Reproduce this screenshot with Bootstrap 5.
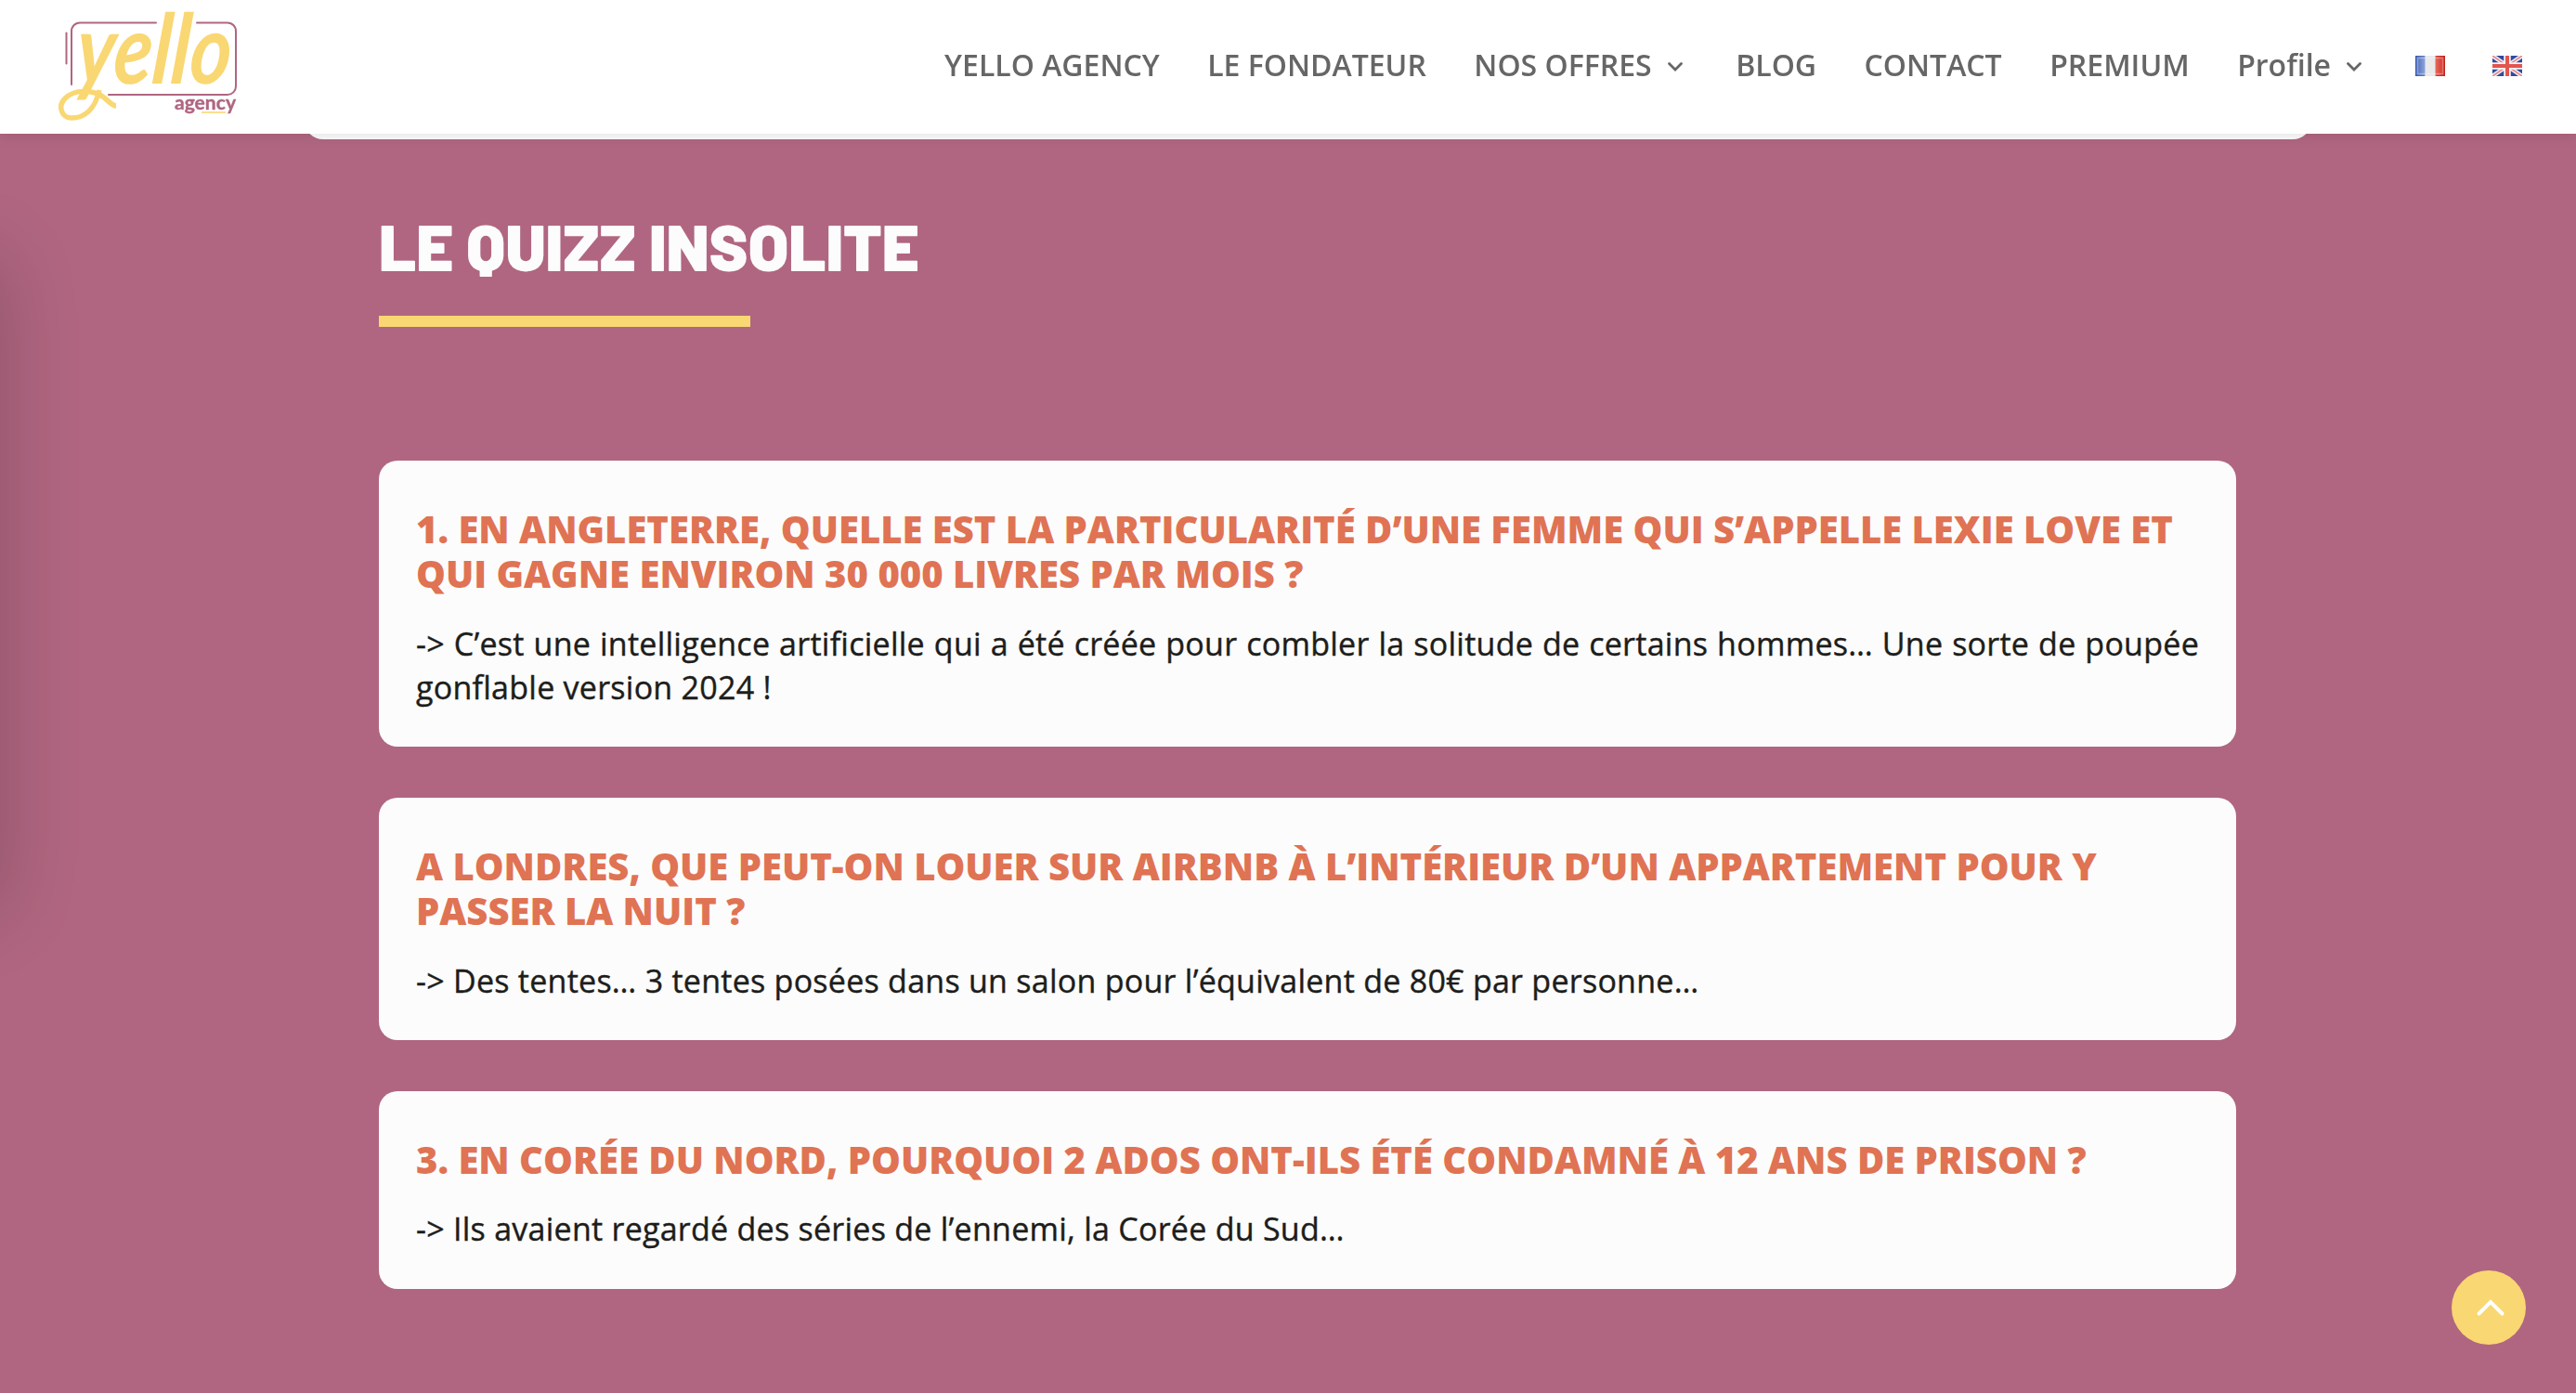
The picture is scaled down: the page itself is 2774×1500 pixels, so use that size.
<!DOCTYPE html>
<html lang="fr">
<head>
  <meta charset="UTF-8">
  <meta name="viewport" content="width=device-width, initial-scale=1">
  <title>Le quizz insolite - Yello Agency</title>
  <link href="https://cdn.jsdelivr.net/npm/bootstrap@5.3.3/dist/css/bootstrap.min.css" rel="stylesheet">
  <style>
    :root {
      --yello-pink: #b06680;
      --yello-yellow: #f9d772;
      --yello-orange: #df7353;
      --yello-white: #fcfcfc;
    }
    html, body { height: 100%; }
    body {
      background: var(--yello-pink);
      font-family: "Open Sans", "Noto Sans", sans-serif;
      color: #1d1d1b;
      overflow: hidden;
    }

    .site-header {
      height: 144px;
      padding: 0 58px 0 60px;
      box-shadow: 0 2px 14px rgba(0, 0, 0, .1);
    }
    .site-logo { width: 200px; height: 144px; }
    .site-menu { gap: 51.5px; margin-top: -2px; }
    .site-menu .nav-link {
      color: #666;
      font-size: 32px;
      font-weight: 600;
      line-height: 44px;
      margin-top: -2px;
      white-space: nowrap;
    }
    .menu-arrow { width: 18px; height: 12px; margin: 3px 5px 0 16px; }
    .menu-flag { width: 32px; height: 22px; }

    .page-main { padding-left: 42px; }
    .previous-block {
      width: 2161px;
      height: 60px;
      margin-top: -54px;
      border-radius: 0 0 20px 20px;
      background: var(--yello-white);
    }
    .quizz { width: 2000px; padding-top: 72px; }
    .quizz-title {
      font-family: "Barlow", Roboto, sans-serif;
      font-size: 70px;
      font-weight: 900;
      line-height: 84px;
      color: var(--yello-white);
      white-space: nowrap;
    }
    .quizz-line { width: 400px; height: 12px; margin-top: 34px; background: var(--yello-yellow); }
    .quizz-list { gap: 55px; margin-top: 144px; }
    .quizz-item {
      padding: 50px 40px 39.6px;
      border-radius: 20px;
      background: var(--yello-white);
    }
    .quizz-item h2 {
      font-size: 40px;
      font-weight: 800;
      line-height: 48px;
      margin-bottom: 27.5px;
      color: var(--yello-orange);
    }
    .quizz-item p {
      font-size: 34px;
      line-height: 47.6px;
      letter-spacing: .26px;
      text-align: justify;
      -webkit-text-stroke: .4px #1d1d1b;
    }

    /* closed side panel, only its shadow reaches the page */
    .side-panel {
      position: fixed;
      top: 280px;
      left: -400px;
      width: 400px;
      height: 700px;
      box-shadow: 0 0 80px rgba(0, 0, 0, .2);
    }
    .back-top {
      position: fixed;
      right: 54px;
      bottom: 52px;
      width: 80px;
      height: 80px;
      background: var(--yello-yellow);
    }
  </style>
</head>
<body>

<header class="site-header sticky-top bg-white d-flex align-items-center justify-content-between">
  <a href="#" class="d-block" aria-label="Yello Agency">
    <svg class="site-logo d-block overflow-visible" viewBox="60 0 200 144">
      <g fill="none" stroke="#b06680" stroke-width="2" stroke-linecap="round">
        <path d="M71.500 35.500V68.500"/>
        <path d="M77 91V34a9 9 0 0 1 9-9.500H168"/>
        <path d="M212 24.500H245a9 9 0 0 1 9 9.500V93a9 9 0 0 1-9 9H117"/>
      </g>
      <text transform="translate(80 90) skewX(-5)" font-family="Lato, sans-serif" font-size="104" font-weight="700" font-style="italic" fill="#f9d772" textLength="167" lengthAdjust="spacingAndGlyphs">yello</text>
      <path d="M107 97C102 119 90 127 77 127C66 127 62 114 70 106C80 96 99 96 112 105C117 109 121 114 125 114" fill="none" stroke="#f9d772" stroke-width="5.500"/>
      <text x="188" y="118" font-family="Lato, sans-serif" font-size="21" font-weight="700" fill="#b06680" stroke="#b06680" stroke-width=".4" textLength="66" lengthAdjust="spacingAndGlyphs">agency</text>
      <path d="M217 121H243" stroke="#f9d772" stroke-width="1.600"/>
    </svg>
  </a>

  <nav>
    <ul class="nav site-menu align-items-center flex-nowrap">
      <li><a class="nav-link p-0" href="#">YELLO AGENCY</a></li>
      <li><a class="nav-link p-0" href="#">LE FONDATEUR</a></li>
      <li>
        <a class="nav-link p-0 d-flex align-items-center" href="#">NOS OFFRES
          <svg class="menu-arrow" viewBox="0 0 18 12"><path d="M2.500 2.500L9 9l6.500-6.500" fill="none" stroke="#666" stroke-width="2.800" stroke-linecap="round"/></svg>
        </a>
      </li>
      <li><a class="nav-link p-0" href="#">BLOG</a></li>
      <li><a class="nav-link p-0" href="#">CONTACT</a></li>
      <li><a class="nav-link p-0" href="#">PREMIUM</a></li>
      <li>
        <a class="nav-link p-0 d-flex align-items-center" href="#">Profile
          <svg class="menu-arrow" viewBox="0 0 18 12"><path d="M2.500 2.500L9 9l6.500-6.500" fill="none" stroke="#666" stroke-width="2.800" stroke-linecap="round"/></svg>
        </a>
      </li>
      <li>
        <a class="d-block" href="#" aria-label="Français">
          <svg class="menu-flag d-block" viewBox="0 0 32 22">
            <defs>
              <linearGradient id="flagBlue"><stop offset="0" stop-color="#4566b8"/><stop offset="1" stop-color="#8ea5dc"/></linearGradient>
              <linearGradient id="flagRed"><stop offset="0" stop-color="#e56a60"/><stop offset="1" stop-color="#d02a20"/></linearGradient>
            </defs>
            <path fill="#e9e9ec" d="M0 0h32v22H0z"/>
            <path fill="url(#flagBlue)" d="M0 0h10.500v22H0z"/>
            <path fill="url(#flagRed)" d="M21.500 0H32v22H21.500z"/>
            <path fill="none" stroke="#fff" stroke-opacity=".3" stroke-width="1.500" d="M2.500 2.500h27v17h-27z"/>
            <path fill="none" stroke="#33499c" stroke-opacity=".5" d="M10 .5H.5v21H10"/>
            <path fill="none" stroke="#b81d14" stroke-opacity=".6" d="M22 .5h9.500v21H22"/>
          </svg>
        </a>
      </li>
      <li>
        <a class="d-block" href="#" aria-label="English">
          <svg class="menu-flag d-block" viewBox="0 0 32 22">
            <path fill="#3349a0" d="M0 0h32v22H0z"/>
            <path stroke="#f3f3f8" stroke-width="4.500" d="M0 0l32 22M32 0L0 22"/>
            <path stroke="#e58a8c" stroke-width="1.800" d="M0 0l32 22M32 0L0 22"/>
            <path stroke="#fbf3f3" stroke-width="7.500" d="M16 0v22M0 11h32"/>
            <path stroke="#e25550" stroke-width="4" d="M16 0v22M0 11h32"/>
          </svg>
        </a>
      </li>
    </ul>
  </nav>
</header>

<main class="page-main">
  <div class="previous-block mx-auto"></div>

  <section class="quizz mx-auto">
    <h1 class="quizz-title mb-0">LE QUIZZ INSOLITE</h1>
    <div class="quizz-line"></div>

    <div class="quizz-list d-flex flex-column">
      <article class="quizz-item">
        <h2>1. EN ANGLETERRE, QUELLE EST LA PARTICULARITÉ D’UNE FEMME QUI S’APPELLE LEXIE LOVE ET QUI GAGNE ENVIRON 30 000 LIVRES PAR MOIS ?</h2>
        <p class="mb-0">-&gt; C’est une intelligence artificielle qui a été créée pour combler la solitude de certains hommes… Une sorte de poupée gonflable version 2024 !</p>
      </article>
      <article class="quizz-item">
        <h2>A LONDRES, QUE PEUT-ON LOUER SUR AIRBNB À L’INTÉRIEUR D’UN APPARTEMENT POUR Y PASSER LA NUIT ?</h2>
        <p class="mb-0">-&gt; Des tentes… 3 tentes posées dans un salon pour l’équivalent de 80€ par personne…</p>
      </article>
      <article class="quizz-item">
        <h2>3. EN CORÉE DU NORD, POURQUOI 2 ADOS ONT-ILS ÉTÉ CONDAMNÉ À 12 ANS DE PRISON ?</h2>
        <p class="mb-0">-&gt; Ils avaient regardé des séries de l’ennemi, la Corée du Sud…</p>
      </article>
    </div>
  </section>
</main>

<div class="side-panel"></div>

<a href="#" class="back-top rounded-circle d-flex align-items-center justify-content-center" aria-label="Haut de page">
  <svg width="80" height="80" viewBox="0 0 80 80"><path d="M29.500 46.500L42 34l12.500 12.500" fill="none" stroke="#fff" stroke-width="4" stroke-linecap="round"/></svg>
</a>

<script src="https://cdn.jsdelivr.net/npm/bootstrap@5.3.3/dist/js/bootstrap.bundle.min.js"></script>
</body>
</html>
